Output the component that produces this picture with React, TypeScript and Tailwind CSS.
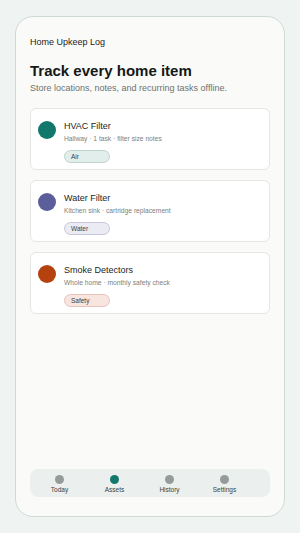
const ITEMS = [
  { name: 'HVAC Filter', meta: 'Hallway · 1 task · filter size notes', tag: 'Air', dot: 'bg-[#12786b]', pill: 'bg-[#e2eeeb] border-[#bcd3ce]' },
  { name: 'Water Filter', meta: 'Kitchen sink · cartridge replacement', tag: 'Water', dot: 'bg-[#5b5e9b]', pill: 'bg-[#ebebf3] border-[#c6c7da]' },
  { name: 'Smoke Detectors', meta: 'Whole home · monthly safety check', tag: 'Safety', dot: 'bg-[#b5420e]', pill: 'bg-[#f8e5e0] border-[#e6c2b8]' },
]

const TABS = ['Today', 'Assets', 'History', 'Settings']

export default function App() {
  return (
    <div className="min-h-[533px] w-[300px] bg-[#eff3f2] pt-[16px] px-[15px] font-['Liberation_Sans',Arial,sans-serif]">
      <div className="h-[501px] rounded-[18px] border border-[#cfd9d6] bg-[#fafaf8] px-[14px] pt-[19px] pb-[19px] flex flex-col">
        <div className="text-[9px] leading-[12px] text-[#1f2322]">Home Upkeep Log</div>

        <h1 className="mt-[14px] text-[15px] leading-[18px] font-bold text-[#151817]">Track every home item</h1>
        <p className="mt-[3px] text-[9px] leading-[11px] text-[#6c7371]">
          Store locations, notes, and recurring tasks offline.
        </p>

        {/* Asset cards */}
        <div className="mt-[14px] flex flex-col gap-[10px]">
          {ITEMS.map(item => (
            <div key={item.name} className="h-[62px] rounded-[6px] border border-[#e3e7e5] bg-white pl-[7px] pt-[11px] flex gap-[8px]">
              <div className={`w-[18px] h-[18px] rounded-full mt-[1px] ${item.dot}`} />
              <div className="flex flex-col">
                <div className="text-[9px] leading-[12px] text-[#222625]">{item.name}</div>
                <div className="mt-[1.5px] text-[6.7px] leading-[9px] text-[#7b817f]">{item.meta}</div>
                <div className={`mt-[7.5px] w-[46px] h-[13px] rounded-full border pl-[6px] text-[6.5px] leading-[11px] text-[#3a3f3e] ${item.pill}`}>
                  {item.tag}
                </div>
              </div>
            </div>
          ))}
        </div>

        {/* Bottom nav */}
        <div className="mt-auto h-[28px] rounded-[8px] bg-[#ebf0ee] flex pl-[2px] pt-[6px]">
          {TABS.map(tab => (
            <div key={tab} className="w-[55px] flex flex-col items-center">
              <div className={`w-[9px] h-[9px] rounded-full ${tab === 'Assets' ? 'bg-[#12786b]' : 'bg-[#959b9a]'}`} />
              <div className="mt-[1px] text-[6.5px] leading-[9px] text-[#3d4241]">{tab}</div>
            </div>
          ))}
        </div>
      </div>
    </div>
  )
}
